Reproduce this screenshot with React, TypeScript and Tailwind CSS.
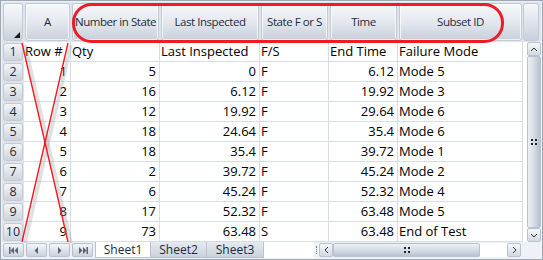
import React from "react";

const cols = [47, 89, 100, 69, 69, 125];
const headers = ["A", "Number in State", "Last Inspected", "State F or S", "Time", "Subset ID"];
const rows: string[][] = [
  ["Row #", "Qty", "Last Inspected", "F/S", "End Time", "Failure Mode"],
  ["1", "5", "0", "F", "6.12", "Mode 5"],
  ["2", "16", "6.12", "F", "19.92", "Mode 3"],
  ["3", "12", "19.92", "F", "29.64", "Mode 6"],
  ["4", "18", "24.64", "F", "35.4", "Mode 6"],
  ["5", "18", "35.4", "F", "39.72", "Mode 1"],
  ["6", "2", "39.72", "F", "45.24", "Mode 2"],
  ["7", "6", "45.24", "F", "52.32", "Mode 4"],
  ["8", "17", "52.32", "F", "63.48", "Mode 5"],
  ["9", "73", "63.48", "S", "63.48", "End of Test"],
];
const rightAligned = [true, true, true, false, true, false];

function HeaderCell({ w, label }: { w: number; label: string }) {
  return (
    <div className="h-full p-[1px] shrink-0" style={{ width: w }}>
      <div className="h-full w-full rounded-[3px] border border-[#c3cad5] bg-linear-to-b from-[#f6f8fa] via-[#e4e8ee] to-[#c8d0db] shadow-[inset_0_0_0_1px_rgba(255,255,255,0.7)] flex items-center justify-center text-[11.5px] tracking-[-0.45px] text-[#1c2b40] whitespace-nowrap">
        {label}
      </div>
    </div>
  );
}

function NavBtn({ children }: { children: React.ReactNode }) {
  return (
    <div className="h-[14px] w-[21px] rounded-[2px] border border-[#b8c1cd] bg-linear-to-b from-[#f4f6f9] to-[#c9d1dc] flex items-center justify-center text-[#5b6575]">
      {children}
    </div>
  );
}

export default function App() {
  return (
    <div className="relative w-[543px] h-[260px] overflow-hidden border border-[#9ea8b5] bg-[#eef1f5] p-[1px]" style={{ fontFamily: '"Open Sans", "Noto Sans", sans-serif' }}>
      <div className="flex">
        <div className="w-[521px] bg-white">
          {/* header */}
          <div className="flex h-[40px] bg-[#dfe4ea]">
            <div className="h-full w-[22px] p-[1px] shrink-0">
              <div className="relative h-full w-full rounded-[3px] border border-[#c3cad5] bg-linear-to-b from-[#f6f8fa] via-[#e4e8ee] to-[#c8d0db]">
                <svg className="absolute right-[2px] bottom-[2px]" width="6" height="6" viewBox="0 0 6 6">
                  <polygon points="6,0 6,6 0,6" fill="#1a1a1a" />
                </svg>
              </div>
            </div>
            {headers.map((h, i) => (
              <HeaderCell key={i} w={cols[i]} label={h} />
            ))}
          </div>
          {/* rows */}
          {rows.map((r, ri) => (
            <div key={ri} className="flex h-[20px]">
              <div className="h-full w-[22px] shrink-0 bg-[#dfe4ea] p-[1px]">
                <div className="h-full w-full rounded-[3px] border border-[#c3cad5] bg-linear-to-b from-[#f3f5f8] to-[#cdd4de] flex items-center justify-center text-[12.5px] text-[#1c2b40] leading-none">
                  {ri + 1}
                </div>
              </div>
              {r.map((c, ci) => {
                const right = ri > 0 && rightAligned[ci];
                return (
                  <div
                    key={ci}
                    className={`h-full shrink-0 border-r border-b border-[#d7dde5] flex items-center text-[13px] text-black leading-none whitespace-nowrap ${right ? "justify-end pr-[3px]" : "justify-start pl-[1px]"}`}
                    style={{ width: cols[ci] }}
                  >
                    {c}
                  </div>
                );
              })}
            </div>
          ))}
        </div>
        {/* vertical scrollbar column */}
        <div className="w-[18px] flex flex-col bg-white">
          <div className="h-[40px] bg-[#dfe4ea] py-[1px] pr-[2px]">
            <div className="h-full w-full rounded-[3px] border border-[#c3cad5] bg-linear-to-b from-[#f6f8fa] to-[#c8d0db]" />
          </div>
          <div className="flex-1 pl-[4px] flex flex-col bg-white">
            <div className="h-[14px] w-[14px] border border-[#b8c1cd] rounded-[2px] bg-linear-to-b from-[#f6f8fa] to-[#d3d9e2] flex items-center justify-center">
              <svg width="8" height="5" viewBox="0 0 8 5"><polyline points="1,4 4,1 7,4" fill="none" stroke="#333" strokeWidth="1" /></svg>
            </div>
            <div className="flex-1 w-[14px] border border-[#b8c1cd] rounded-[2px] bg-linear-to-r from-[#eef1f5] via-[#d6dde7] to-[#b7c1cf] flex items-center justify-center">
              <svg width="6" height="6" viewBox="0 0 6 6" fill="#222">
                <rect x="0" y="0" width="2" height="2" /><rect x="4" y="0" width="2" height="2" />
                <rect x="0" y="4" width="2" height="2" /><rect x="4" y="4" width="2" height="2" />
              </svg>
            </div>
            <div className="h-[14px] w-[14px] border border-[#b8c1cd] rounded-[2px] bg-linear-to-b from-[#f6f8fa] to-[#d3d9e2] flex items-center justify-center">
              <svg width="8" height="5" viewBox="0 0 8 5"><polyline points="1,1 4,4 7,1" fill="none" stroke="#333" strokeWidth="1" /></svg>
            </div>
          </div>
        </div>
      </div>
      {/* tab bar */}
      <div className="flex h-[16px] items-center bg-[#eef1f5]">
        <div className="flex gap-[2px] pl-[1px] w-[93px]">
          <NavBtn>
            <svg width="10" height="7" viewBox="0 0 10 7" fill="currentColor"><rect x="0" y="0" width="1.5" height="7" /><polygon points="5,0 5,7 1.5,3.5" /><polygon points="9,0 9,7 5.5,3.5" /></svg>
          </NavBtn>
          <NavBtn>
            <svg width="5" height="7" viewBox="0 0 5 7" fill="currentColor"><polygon points="4,0 4,7 0.5,3.5" /></svg>
          </NavBtn>
          <NavBtn>
            <svg width="5" height="7" viewBox="0 0 5 7" fill="currentColor"><polygon points="1,0 1,7 4.5,3.5" /></svg>
          </NavBtn>
          <NavBtn>
            <svg width="10" height="7" viewBox="0 0 10 7" fill="currentColor"><polygon points="1,0 1,7 4.5,3.5" /><polygon points="5,0 5,7 8.5,3.5" /><rect x="8.5" y="0" width="1.5" height="7" /></svg>
          </NavBtn>
        </div>
        <div className="h-full w-[56px] bg-white border-x border-b border-[#b8c1cd] flex items-center justify-center text-[12px] text-[#1c2b40]">Sheet1</div>
        <div className="h-full w-[56px] bg-linear-to-b from-[#e6eaf0] to-[#cbd3de] border-r border-b border-[#b8c1cd] flex items-center justify-center text-[12px] text-[#1c2b40]">Sheet2</div>
        <div className="h-full w-[57px] bg-linear-to-b from-[#e6eaf0] to-[#cbd3de] border-r border-b border-[#b8c1cd] flex items-center justify-center text-[12px] text-[#1c2b40]">Sheet3</div>
        <div className="h-full w-[50px] bg-white" />
        <div className="h-full w-[5px] flex items-center justify-center">
          <div className="w-[2px] h-[8px] border-l border-dotted border-[#777]" />
        </div>
        <div className="h-[14px] w-[14px] border border-[#b8c1cd] rounded-[2px] bg-linear-to-b from-[#f6f8fa] to-[#d3d9e2] flex items-center justify-center">
          <svg width="5" height="8" viewBox="0 0 5 8"><polyline points="4,1 1,4 4,7" fill="none" stroke="#333" strokeWidth="1" /></svg>
        </div>
        <div className="h-[14px] w-[174px] flex">
          <div className="h-full w-[147px] border border-[#b8c1cd] rounded-[2px] bg-linear-to-b from-[#eef1f5] via-[#d6dde7] to-[#b7c1cf] flex items-center justify-center">
            <svg width="6" height="6" viewBox="0 0 6 6" fill="#222">
              <rect x="0" y="0" width="2" height="2" /><rect x="4" y="0" width="2" height="2" />
              <rect x="0" y="4" width="2" height="2" /><rect x="4" y="4" width="2" height="2" />
            </svg>
          </div>
          <div className="flex-1 bg-white" />
        </div>
        <div className="h-[14px] w-[14px] border border-[#b8c1cd] rounded-[2px] bg-linear-to-b from-[#f6f8fa] to-[#d3d9e2] flex items-center justify-center">
          <svg width="5" height="8" viewBox="0 0 5 8"><polyline points="1,1 4,4 1,7" fill="none" stroke="#333" strokeWidth="1" /></svg>
        </div>
      </div>
      {/* red annotation overlay */}
      <svg className="absolute left-0 top-0 pointer-events-none" width="543" height="260" viewBox="0 0 543 260">
        <line x1="24" y1="44" x2="70" y2="242" stroke="#999" strokeOpacity="0.3" strokeWidth="3.5" />
        <line x1="70" y1="44" x2="24" y2="242" stroke="#999" strokeOpacity="0.3" strokeWidth="3.5" />
        <line x1="21" y1="42" x2="67" y2="241" stroke="#ee1c25" strokeWidth="1.4" />
        <line x1="67" y1="42" x2="21" y2="241" stroke="#ee1c25" strokeWidth="1.4" />
        <rect x="72.5" y="3.5" width="429" height="37" rx="18" ry="18" fill="none" stroke="#ee1c25" strokeWidth="3" />
      </svg>
    </div>
  );
}
